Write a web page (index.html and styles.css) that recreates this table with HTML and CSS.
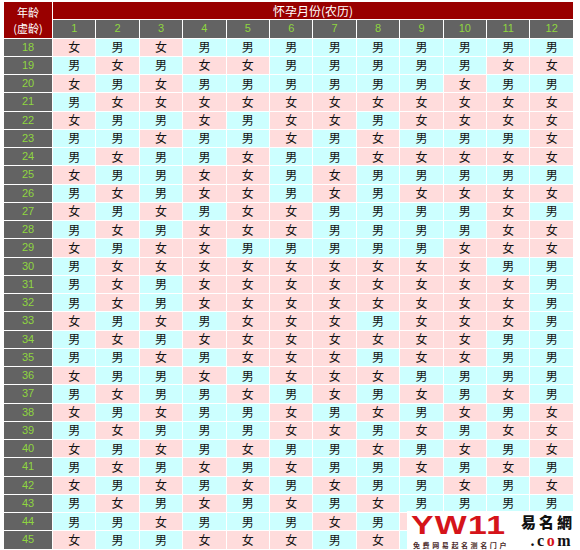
FILE: index.html
```html
<!DOCTYPE html>
<html lang="zh-CN">
<head>
<meta charset="utf-8">
<title>清宫表</title>
<link rel="stylesheet" href="styles.css">
</head>
<body>
<div class="wrap">
<div class="chart">
<div class="corner"><span>年龄</span><span>(虚龄)</span></div>
<div class="title">怀孕月份(农历)</div>
<div class="mo">1</div><div class="mo">2</div><div class="mo">3</div><div class="mo">4</div><div class="mo">5</div><div class="mo">6</div><div class="mo">7</div><div class="mo">8</div><div class="mo">9</div><div class="mo">10</div><div class="mo">11</div><div class="mo">12</div>
<div class="age">18</div><div class="f">女</div><div class="m">男</div><div class="f">女</div><div class="m">男</div><div class="m">男</div><div class="m">男</div><div class="m">男</div><div class="m">男</div><div class="m">男</div><div class="m">男</div><div class="m">男</div><div class="m">男</div>
<div class="age">19</div><div class="m">男</div><div class="f">女</div><div class="m">男</div><div class="f">女</div><div class="f">女</div><div class="m">男</div><div class="m">男</div><div class="m">男</div><div class="m">男</div><div class="m">男</div><div class="f">女</div><div class="f">女</div>
<div class="age">20</div><div class="f">女</div><div class="m">男</div><div class="f">女</div><div class="m">男</div><div class="m">男</div><div class="m">男</div><div class="m">男</div><div class="m">男</div><div class="m">男</div><div class="f">女</div><div class="m">男</div><div class="m">男</div>
<div class="age">21</div><div class="m">男</div><div class="f">女</div><div class="f">女</div><div class="f">女</div><div class="f">女</div><div class="f">女</div><div class="f">女</div><div class="f">女</div><div class="f">女</div><div class="f">女</div><div class="f">女</div><div class="f">女</div>
<div class="age">22</div><div class="f">女</div><div class="m">男</div><div class="m">男</div><div class="f">女</div><div class="m">男</div><div class="f">女</div><div class="f">女</div><div class="m">男</div><div class="f">女</div><div class="f">女</div><div class="f">女</div><div class="f">女</div>
<div class="age">23</div><div class="m">男</div><div class="m">男</div><div class="f">女</div><div class="m">男</div><div class="m">男</div><div class="f">女</div><div class="m">男</div><div class="f">女</div><div class="m">男</div><div class="m">男</div><div class="m">男</div><div class="f">女</div>
<div class="age">24</div><div class="m">男</div><div class="f">女</div><div class="m">男</div><div class="m">男</div><div class="f">女</div><div class="m">男</div><div class="m">男</div><div class="f">女</div><div class="f">女</div><div class="f">女</div><div class="f">女</div><div class="f">女</div>
<div class="age">25</div><div class="f">女</div><div class="m">男</div><div class="m">男</div><div class="f">女</div><div class="f">女</div><div class="m">男</div><div class="f">女</div><div class="m">男</div><div class="m">男</div><div class="m">男</div><div class="m">男</div><div class="m">男</div>
<div class="age">26</div><div class="m">男</div><div class="f">女</div><div class="m">男</div><div class="f">女</div><div class="f">女</div><div class="m">男</div><div class="f">女</div><div class="m">男</div><div class="f">女</div><div class="f">女</div><div class="f">女</div><div class="f">女</div>
<div class="age">27</div><div class="f">女</div><div class="m">男</div><div class="f">女</div><div class="m">男</div><div class="f">女</div><div class="f">女</div><div class="m">男</div><div class="m">男</div><div class="m">男</div><div class="m">男</div><div class="f">女</div><div class="m">男</div>
<div class="age">28</div><div class="m">男</div><div class="f">女</div><div class="m">男</div><div class="f">女</div><div class="f">女</div><div class="f">女</div><div class="m">男</div><div class="m">男</div><div class="m">男</div><div class="m">男</div><div class="f">女</div><div class="f">女</div>
<div class="age">29</div><div class="f">女</div><div class="m">男</div><div class="f">女</div><div class="f">女</div><div class="m">男</div><div class="m">男</div><div class="m">男</div><div class="m">男</div><div class="m">男</div><div class="f">女</div><div class="f">女</div><div class="f">女</div>
<div class="age">30</div><div class="m">男</div><div class="f">女</div><div class="f">女</div><div class="f">女</div><div class="f">女</div><div class="f">女</div><div class="f">女</div><div class="f">女</div><div class="f">女</div><div class="f">女</div><div class="m">男</div><div class="m">男</div>
<div class="age">31</div><div class="m">男</div><div class="f">女</div><div class="m">男</div><div class="f">女</div><div class="f">女</div><div class="f">女</div><div class="f">女</div><div class="f">女</div><div class="f">女</div><div class="f">女</div><div class="f">女</div><div class="m">男</div>
<div class="age">32</div><div class="m">男</div><div class="f">女</div><div class="m">男</div><div class="f">女</div><div class="f">女</div><div class="f">女</div><div class="f">女</div><div class="f">女</div><div class="f">女</div><div class="f">女</div><div class="f">女</div><div class="m">男</div>
<div class="age">33</div><div class="f">女</div><div class="m">男</div><div class="f">女</div><div class="m">男</div><div class="f">女</div><div class="f">女</div><div class="f">女</div><div class="m">男</div><div class="f">女</div><div class="f">女</div><div class="f">女</div><div class="m">男</div>
<div class="age">34</div><div class="m">男</div><div class="f">女</div><div class="m">男</div><div class="f">女</div><div class="f">女</div><div class="f">女</div><div class="f">女</div><div class="f">女</div><div class="f">女</div><div class="f">女</div><div class="m">男</div><div class="m">男</div>
<div class="age">35</div><div class="m">男</div><div class="m">男</div><div class="f">女</div><div class="m">男</div><div class="f">女</div><div class="f">女</div><div class="f">女</div><div class="m">男</div><div class="f">女</div><div class="f">女</div><div class="m">男</div><div class="m">男</div>
<div class="age">36</div><div class="f">女</div><div class="m">男</div><div class="m">男</div><div class="f">女</div><div class="m">男</div><div class="f">女</div><div class="f">女</div><div class="f">女</div><div class="m">男</div><div class="m">男</div><div class="m">男</div><div class="m">男</div>
<div class="age">37</div><div class="m">男</div><div class="f">女</div><div class="m">男</div><div class="m">男</div><div class="f">女</div><div class="m">男</div><div class="f">女</div><div class="m">男</div><div class="f">女</div><div class="m">男</div><div class="f">女</div><div class="m">男</div>
<div class="age">38</div><div class="f">女</div><div class="m">男</div><div class="f">女</div><div class="m">男</div><div class="m">男</div><div class="f">女</div><div class="m">男</div><div class="f">女</div><div class="m">男</div><div class="f">女</div><div class="m">男</div><div class="f">女</div>
<div class="age">39</div><div class="m">男</div><div class="f">女</div><div class="m">男</div><div class="m">男</div><div class="m">男</div><div class="f">女</div><div class="f">女</div><div class="m">男</div><div class="f">女</div><div class="m">男</div><div class="f">女</div><div class="f">女</div>
<div class="age">40</div><div class="f">女</div><div class="m">男</div><div class="f">女</div><div class="m">男</div><div class="f">女</div><div class="m">男</div><div class="m">男</div><div class="f">女</div><div class="m">男</div><div class="f">女</div><div class="m">男</div><div class="f">女</div>
<div class="age">41</div><div class="m">男</div><div class="f">女</div><div class="m">男</div><div class="f">女</div><div class="m">男</div><div class="f">女</div><div class="m">男</div><div class="m">男</div><div class="f">女</div><div class="m">男</div><div class="f">女</div><div class="m">男</div>
<div class="age">42</div><div class="f">女</div><div class="m">男</div><div class="f">女</div><div class="m">男</div><div class="f">女</div><div class="m">男</div><div class="f">女</div><div class="m">男</div><div class="m">男</div><div class="f">女</div><div class="m">男</div><div class="f">女</div>
<div class="age">43</div><div class="m">男</div><div class="f">女</div><div class="m">男</div><div class="f">女</div><div class="m">男</div><div class="f">女</div><div class="m">男</div><div class="f">女</div><div class="m">男</div><div class="m">男</div><div class="m">男</div><div class="m">男</div>
<div class="age">44</div><div class="m">男</div><div class="m">男</div><div class="f">女</div><div class="m">男</div><div class="m">男</div><div class="m">男</div><div class="f">女</div><div class="m">男</div><div class="f"></div><div class="m"></div><div class="f"></div><div class="f"></div>
<div class="age">45</div><div class="f">女</div><div class="m">男</div><div class="m">男</div><div class="f">女</div><div class="f">女</div><div class="f">女</div><div class="m">男</div><div class="f">女</div><div class="m"></div><div class="f"></div><div class="m"></div><div class="m"></div>
</div>
<div class="logo">
  <div class="logo-left">
    <div class="logo-mark">YW11</div>
    <div class="logo-slogan">免费网易起名测名门户</div>
  </div>
  <div class="logo-right">
    <div class="logo-name">易名網</div>
    <div class="logo-com">.c<span class="logo-o">o</span>m</div>
  </div>
</div>
</div>
</body>
</html>
```

FILE: styles.css
```css
html, body {
  margin: 0;
  padding: 0;
  background: #ffffff;
}

.wrap {
  position: relative;
  width: 580px;
  height: 550px;
  overflow: hidden;
}

.chart {
  display: grid;
  grid-template-columns: 48px repeat(12, 42.42px);
  grid-auto-rows: 17.25px;
  gap: 1px;
  margin: 2px 0 0 4px;
  width: 570px;
  font-family: "Noto Sans CJK SC", "Noto Sans", sans-serif;
  font-size: 12px;
}

.chart > div {
  display: flex;
  align-items: center;
  justify-content: center;
  line-height: 1;
}

.corner {
  grid-row: span 2;
  background: #990000;
  color: #ffffff;
  flex-direction: column;
  text-align: center;
  font-size: 11px;
}

.corner span {
  display: block;
  line-height: 16px;
}

.title {
  grid-column: span 12;
  background: #990000;
  color: #ffffff;
  font-size: 12px;
}

.mo, .age {
  background: #636363;
  color: #8fd63f;
  font-family: "Liberation Sans", Arial, sans-serif;
  font-size: 11px;
}

.f {
  background: #ffdcdc;
  color: #111111;
}

.m {
  background: #ccffff;
  color: #111111;
}

.logo {
  position: absolute;
  left: 407px;
  top: 511px;
  width: 168px;
  height: 39px;
  background: #ffffff;
  display: flex;
  align-items: flex-start;
}

.logo-left {
  display: flex;
  flex-direction: column;
  width: 106px;
  padding-left: 4px;
}

.logo-mark {
  font-family: "Liberation Sans", Arial, sans-serif;
  font-weight: bold;
  font-size: 26px;
  line-height: 29px;
  height: 29px;
  letter-spacing: 1px;
  color: #d5141a;
  transform: scaleX(1.3);
  transform-origin: left center;
}

.logo-slogan {
  font-family: "Noto Sans CJK SC", sans-serif;
  font-weight: bold;
  font-size: 7px;
  line-height: 10px;
  letter-spacing: 2.6px;
  color: #4a2a2a;
  padding-left: 2px;
}

.logo-right {
  display: flex;
  flex-direction: column;
  align-items: flex-end;
  width: 58px;
}

.logo-name {
  font-family: "Noto Sans CJK TC", "Noto Sans CJK SC", sans-serif;
  font-weight: 900;
  font-size: 15px;
  line-height: 21px;
  letter-spacing: 3px;
  color: #111111;
}

.logo-com {
  font-family: "Liberation Serif", serif;
  font-weight: bold;
  font-size: 16px;
  line-height: 18px;
  letter-spacing: 2.5px;
  color: #111111;
  padding-right: 2px;
}

.logo-o {
  color: #d5141a;
}
```
